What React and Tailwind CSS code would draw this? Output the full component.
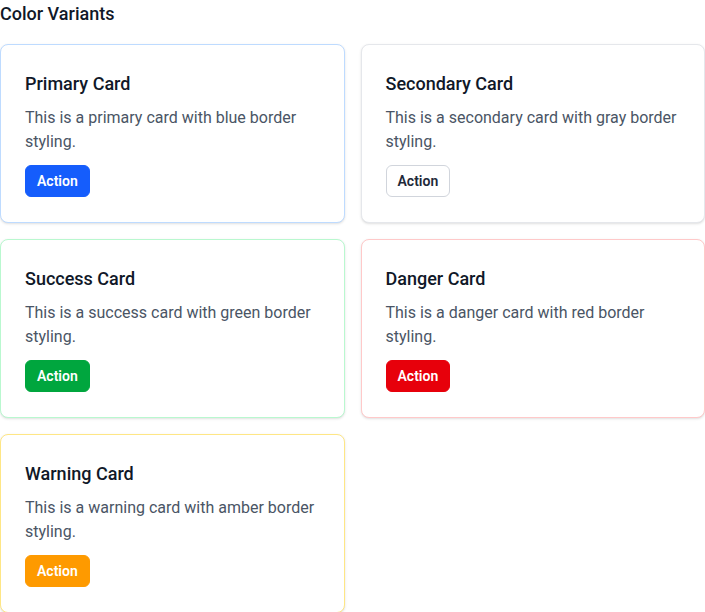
export default function App() {
  const cards = [
    { title: "Primary Card", text: "This is a primary card with blue border styling.", border: "border-blue-200", btn: "bg-blue-600 text-white border border-blue-600" },
    { title: "Secondary Card", text: "This is a secondary card with gray border styling.", border: "border-gray-200", btn: "bg-white text-gray-800 border border-gray-300" },
    { title: "Success Card", text: "This is a success card with green border styling.", border: "border-green-200", btn: "bg-green-600 text-white border border-green-600" },
    { title: "Danger Card", text: "This is a danger card with red border styling.", border: "border-red-200", btn: "bg-red-600 text-white border border-red-600" },
    { title: "Warning Card", text: "This is a warning card with amber border styling.", border: "border-amber-200", btn: "bg-amber-500 text-white border border-amber-500" },
  ];
  return (
    <div className="bg-white" style={{ fontFamily: 'Roboto, "Noto Sans", sans-serif' }}>
      <h3 className="text-[18px] leading-7 font-medium text-gray-900 mb-4">Color Variants</h3>
      <div className="grid grid-cols-2 gap-4">
        {cards.map((c) => (
          <div key={c.title} className={`rounded-lg border bg-white shadow-sm px-6 pt-[25px] pb-6 ${c.border}`}>
            <h4 className="text-lg leading-7 font-medium text-gray-900 mb-2">{c.title}</h4>
            <p className="text-base leading-6 text-gray-600">{c.text}</p>
            <div className="mt-[11px] h-[33px]">
              <button className={`rounded-md px-[11px] h-8 text-sm font-semibold ${c.btn}`}>Action</button>
            </div>
          </div>
        ))}
      </div>
    </div>
  );
}
